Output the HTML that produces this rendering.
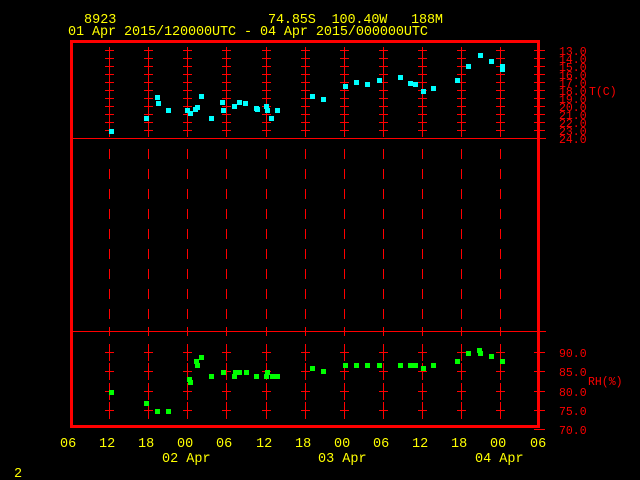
<!DOCTYPE html>
<html><head><style>
html,body{margin:0;padding:0;background:#000;width:640px;height:480px;overflow:hidden}
svg{display:block}
text{font-family:"Liberation Mono",monospace;white-space:pre}
.y{fill:#ffff00;font-size:13.5px}
.r{fill:#ff0000;font-size:11.5px}
</style></head><body>
<svg id="s" width="640" height="480" xmlns="http://www.w3.org/2000/svg" xml:space="preserve">
<g id="g" fill="#ff0000" shape-rendering="crispEdges"></g>
<g id="p" shape-rendering="crispEdges"></g>
<text class="y" x="84" y="23">8923</text>
<text class="y" x="268" y="23" textLength="175">74.85S  100.40W   188M</text>
<text class="y" x="68" y="35" textLength="360">01 Apr 2015/120000UTC - 04 Apr 2015/000000UTC</text>
<text class="r" x="559" y="55">13.0</text>
<text class="r" x="559" y="63">14.0</text>
<text class="r" x="559" y="71">15.0</text>
<text class="r" x="559" y="79">16.0</text>
<text class="r" x="559" y="87">17.0</text>
<text class="r" x="559" y="95">18.0</text>
<text class="r" x="559" y="103">19.0</text>
<text class="r" x="559" y="111">20.0</text>
<text class="r" x="559" y="119">21.0</text>
<text class="r" x="559" y="127">22.0</text>
<text class="r" x="559" y="135">23.0</text>
<text class="r" x="559" y="143">24.0</text>
<text class="r" x="589" y="95">T(C)</text>
<text class="r" x="559" y="357">90.0</text>
<text class="r" x="559" y="376">85.0</text>
<text class="r" x="559" y="396">80.0</text>
<text class="r" x="559" y="415">75.0</text>
<text class="r" x="559" y="434">70.0</text>
<text class="r" x="588" y="385">RH(%)</text>
<text class="y" x="60" y="447">06</text>
<text class="y" x="99" y="447">12</text>
<text class="y" x="138" y="447">18</text>
<text class="y" x="177" y="447">00</text>
<text class="y" x="216" y="447">06</text>
<text class="y" x="256" y="447">12</text>
<text class="y" x="295" y="447">18</text>
<text class="y" x="334" y="447">00</text>
<text class="y" x="373" y="447">06</text>
<text class="y" x="412" y="447">12</text>
<text class="y" x="451" y="447">18</text>
<text class="y" x="490" y="447">00</text>
<text class="y" x="530" y="447">06</text>
<text class="y" x="162" y="462">02 Apr</text>
<text class="y" x="318" y="462">03 Apr</text>
<text class="y" x="475" y="462">04 Apr</text>
<text class="y" x="14" y="477">2</text>
</svg>
<script>
var g=document.getElementById('g'),p=document.getElementById('p'),h='';
function R(x,y,w,hh){h+='<rect x="'+x+'" y="'+y+'" width="'+w+'" height="'+hh+'"/>';}
R(70,40,470,3);R(70,425,470,3);R(70,40,3,388);R(537,40,3,388);
R(72,138,474,1);R(72,331,474,1);
for(var k=1;k<=11;k++){var x=Math.round(70+39.1*k);
 R(x,47,1,90);
 for(var t=0;t<11;t++){R(x-4,50+8*t,9,1);}
 for(var y=149;y<325;y+=20)R(x,y,1,10);
 R(x,327,1,9);
 [352,371,391,410].forEach(function(y){R(x-4,y,9,1);R(x,y-8,1,17);});
}
for(var t=0;t<12;t++){R(534,50+8*t,11,1);}
[352,371,391,410,429].forEach(function(y){R(534,y,11,1);});
g.innerHTML=h;
var c=[[111,131],[146,118],[157,97],[158,103],[168,110],[187,110],[190,113],[195,109],[197,107],[201,96],[211,118],[222,102],[223,110],[234,106],[239,102],[245,103],[256,108],[257,109],[266,106],[267,110],[271,118],[277,110],[312,96],[323,99],[345,86],[356,82],[367,84],[379,80],[400,77],[410,83],[415,84],[423,91],[433,88],[457,80],[468,66],[480,55],[491,61],[502,66],[502,69]];
var gr=[[111,392],[146,403],[157,411],[168,411],[189,379],[190,382],[196,361],[197,365],[201,357],[211,376],[223,372],[234,376],[235,372],[239,372],[246,372],[256,376],[267,372],[266,376],[272,376],[277,376],[312,368],[323,371],[345,365],[356,365],[367,365],[379,365],[400,365],[410,365],[415,365],[423,368],[433,365],[457,361],[468,353],[480,353],[479,350],[491,356],[502,361]];
var q='';
c.forEach(function(a){q+='<rect x="'+(a[0]-2)+'" y="'+(a[1]-2)+'" width="5" height="5" fill="#00ffff"/>';});
gr.forEach(function(a){q+='<rect x="'+(a[0]-2)+'" y="'+(a[1]-2)+'" width="5" height="5" fill="#00ff00"/>';});
p.innerHTML=q;
</script>
</body></html>
